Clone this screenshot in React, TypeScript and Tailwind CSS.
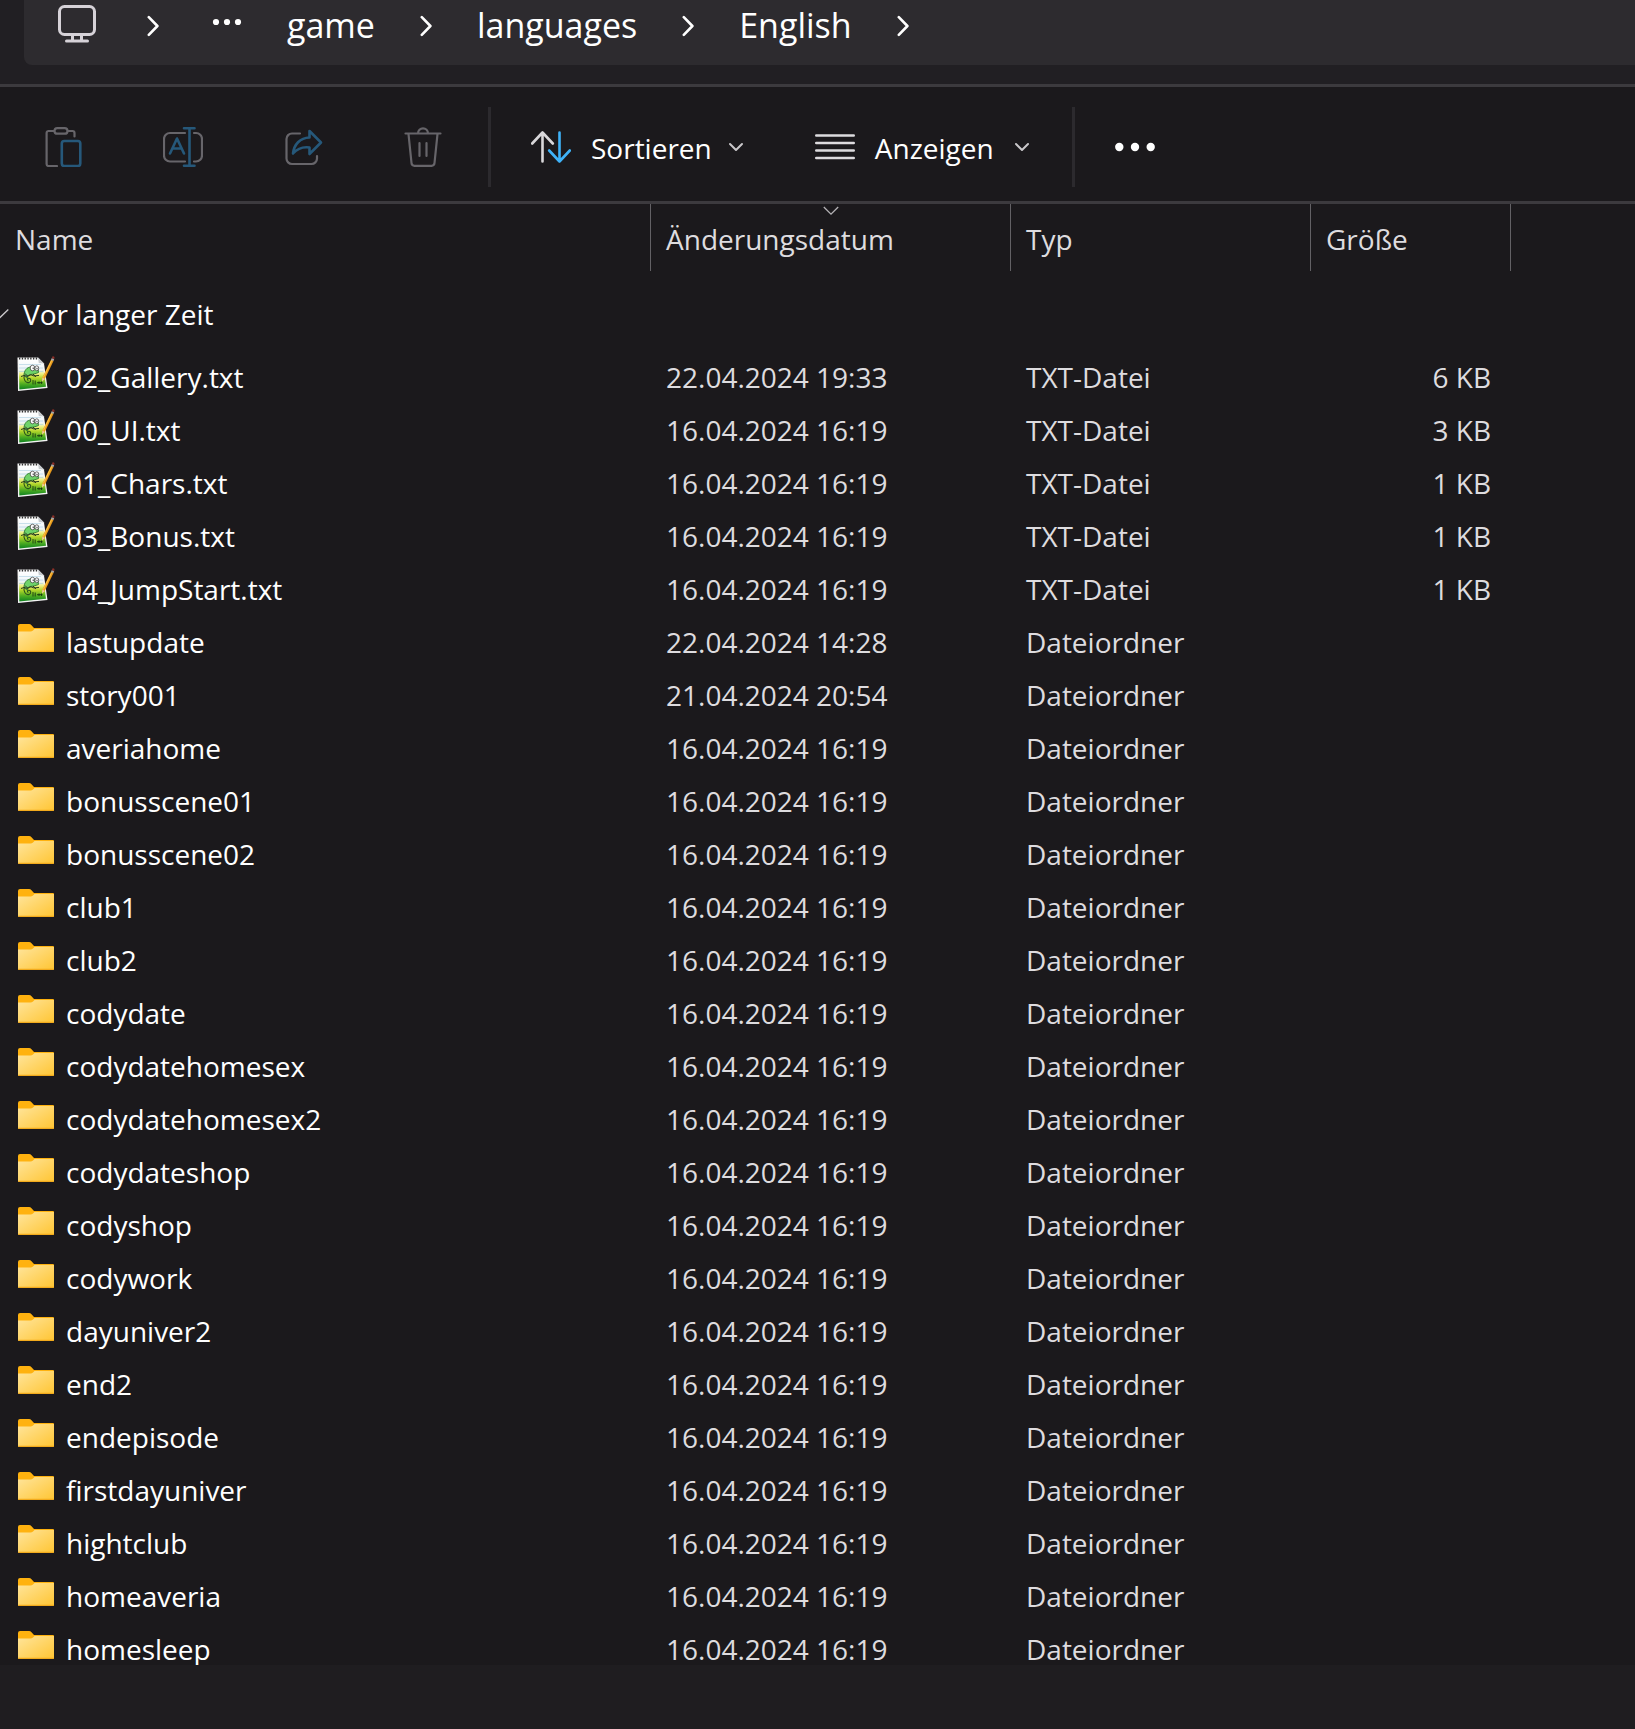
import React from "react";

type Entry = { name: string; date: string; size?: string };

const OLD = "16.04.2024 16:19";

const entries: Entry[] = [
  { name: "02_Gallery.txt", date: "22.04.2024 19:33", size: "6 KB" },
  { name: "00_UI.txt", date: OLD, size: "3 KB" },
  { name: "01_Chars.txt", date: OLD, size: "1 KB" },
  { name: "03_Bonus.txt", date: OLD, size: "1 KB" },
  { name: "04_JumpStart.txt", date: OLD, size: "1 KB" },
  { name: "lastupdate", date: "22.04.2024 14:28" },
  { name: "story001", date: "21.04.2024 20:54" },
  ...[
    "averiahome",
    "bonusscene01",
    "bonusscene02",
    "club1",
    "club2",
    "codydate",
    "codydatehomesex",
    "codydatehomesex2",
    "codydateshop",
    "codyshop",
    "codywork",
    "dayuniver2",
    "end2",
    "endepisode",
    "firstdayuniver",
    "hightclub",
    "homeaveria",
    "homesleep",
  ].map((name) => ({ name, date: OLD })),
];

function MonitorIcon() {
  return (
    <svg className="h-10 w-[38px]" viewBox="0 0 38 40" fill="none" stroke="#d6d2d8" strokeWidth="3" strokeLinecap="round">
      <rect x="1.5" y="2.5" width="35" height="28" rx="5" />
      <path d="M14.5 31v6M23.5 31v6M8.5 37h21" />
    </svg>
  );
}

function CrumbChevron() {
  return (
    <svg className="mt-1 h-6 w-3 shrink-0" viewBox="0 0 12 24" fill="none" stroke="#fff" strokeWidth="2.6" strokeLinecap="round" strokeLinejoin="round" aria-hidden="true">
      <path d="M1.8 3.2l8.6 8.8-8.6 8.8" />
    </svg>
  );
}

function DownChevron() {
  return (
    <svg className="h-4 w-4 shrink-0" viewBox="0 0 16 16" fill="none" stroke="#c9c7ca" strokeWidth="2" strokeLinecap="round" strokeLinejoin="round" aria-hidden="true">
      <path d="M2 5l6 6 6-6" />
    </svg>
  );
}

function PasteIcon() {
  return (
    <svg className="h-10 w-10" viewBox="0 0 40 40" fill="none" stroke="#67656a" strokeWidth="2.2" strokeLinecap="round" strokeLinejoin="round">
      <path d="M14 39H5.6a2 2 0 0 1-2-2V6a2 2 0 0 1 2-2H11M25 4h4.5a2 2 0 0 1 2 2v3.500" />
      <rect x="11.500" y="1.100" width="13" height="5.600" rx="2.800" />
      <rect x="18.800" y="14" width="18.500" height="25" rx="2.500" stroke="#26587a" strokeWidth="2.600" />
    </svg>
  );
}

function RenameIcon() {
  return (
    <svg className="h-10 w-10" viewBox="0 0 40 40" fill="none" stroke="#67656a" strokeWidth="2.2" strokeLinecap="round" strokeLinejoin="round">
      <path d="M22 6H7a6 6 0 0 0-6 6v16.500a6 6 0 0 0 6 6h15M31 6h2a6 6 0 0 1 6 6v16.500a6 6 0 0 1-6 6h-2" />
      <g stroke="#26587a" strokeWidth="2.600">
        <path d="M26.500 1.500v37M21 1.300h10.500M21 38.700h10.500" />
        <path d="M7 26.500l7-15 7 15M9.500 21.500h9.200" />
      </g>
    </svg>
  );
}

function ShareIcon() {
  return (
    <svg className="h-10 w-10" viewBox="0 0 40 40" fill="none" stroke="#67656a" strokeWidth="2.2" strokeLinecap="round" strokeLinejoin="round">
      <path d="M17 6.500H9a5.500 5.500 0 0 0-5.500 5.500v19.500A5.500 5.500 0 0 0 9 37h19.500a5.500 5.500 0 0 0 5.500-5.500V29" />
      <path d="M26.500 4L38 15.500 26.500 27v-6.500c-7-1-12 1-16.500 6C11 17.500 17 10.800 26.500 10.500z" stroke="#26587a" strokeWidth="2.600" />
    </svg>
  );
}

function TrashIcon() {
  return (
    <svg className="h-10 w-10" viewBox="0 0 40 40" fill="none" stroke="#67656a" strokeWidth="2.2" strokeLinecap="round" strokeLinejoin="round">
      <path d="M2.500 6.500h35M15 6.500a5 5.200 0 0 1 10 0M5.500 7l3 29a3 3 0 0 0 3 2.800h17a3 3 0 0 0 3-2.800l3-29M16.500 16v13M23.500 16v13" />
    </svg>
  );
}

function SortIcon() {
  return (
    <svg className="h-10 w-10" viewBox="0 0 40 40" fill="none" strokeWidth="2.600" strokeLinecap="round" strokeLinejoin="round" aria-hidden="true">
      <path d="M11.500 34.500v-29M1.200 16.500l10.300-11 10.300 11" stroke="#d9d7da" />
      <path d="M28.500 5.500v29M18.200 23.500l10.300 11 10.300-11" stroke="#3fb2f8" />
    </svg>
  );
}

function LinesIcon() {
  return (
    <svg className="h-10 w-10" viewBox="0 0 40 40" stroke="#dddbde" strokeWidth="2.400" strokeLinecap="round" aria-hidden="true">
      <path d="M1.200 8.500h37.600M1.200 16h37.600M1.200 23.500h37.600M1.200 31h37.600" />
    </svg>
  );
}

function FolderIcon() {
  return (
    <svg className="mb-[5px] h-10 w-10 shrink-0" viewBox="0 0 40 40" aria-hidden="true">
      <defs>
        <linearGradient id="folder-front" x1="0" y1="0" x2="1" y2="1">
          <stop offset="0" stopColor="#ffe59c" />
          <stop offset="1" stopColor="#ffc533" />
        </linearGradient>
      </defs>
      <path d="M2 6a2 2 0 0 1 2-2h9q1.500 0 2.500 1.200L18 8h19a1 1 0 0 1 1 1v8H2z" fill="#ffb20f" />
      <path d="M2 11.500h12.500q1.500 0 2.500-1l1.500-1.500H38v22a1 1 0 0 1-1 1H3a1 1 0 0 1-1-1z" fill="url(#folder-front)" />
      <path d="M2.300 31.400h35.400" stroke="#f2aa1c" strokeWidth="1.200" />
    </svg>
  );
}

function TextFileIcon() {
  return (
    <svg className="mb-[5px] h-10 w-10 shrink-0" viewBox="0 0 40 40" aria-hidden="true">
      <defs>
        <linearGradient id="note-page" x1="0" y1="0" x2="0" y2="1">
          <stop offset="0" stopColor="#ffffff" />
          <stop offset="0.34" stopColor="#eef5f8" />
          <stop offset="0.48" stopColor="#eef080" />
          <stop offset="0.62" stopColor="#b4d62a" />
          <stop offset="0.82" stopColor="#4cab22" />
          <stop offset="1" stopColor="#0f8220" />
        </linearGradient>
      </defs>
      <path d="M1.500 2.500L22 2.500 28 8.500 31.500 33 2 36z" fill="#f4f4f4" />
      <path d="M2.800 5L22 4.500 27 9 30 31.800 3.300 34.500z" fill="url(#note-page)" />
      <path d="M22 2.500l.8 5.500 5.200.5z" fill="#c5c9cc" />
      <path d="M3 3.500h19" stroke="#303030" strokeWidth="1.800" strokeDasharray="1.300 1.500" />
      <path d="M3 9.500h22M3 13h24M3 16.500h24" stroke="#a9cfe0" strokeWidth="0.600" />
      <path d="M8 20.500c0-5 3-8.500 7-8.500l7 2 .5 3.500-4.500 1.500-4 .5c-2 .5-3 2-2.500 4z" fill="#6fd36a" stroke="#2f7a2c" strokeWidth="0.900" />
      <path d="M8.300 20c-1.300 4.500 1.500 8.500 4.700 7.500 2.800-1 2-4.500-.5-4.200-1.500.4-1.200 2 0 2" fill="none" stroke="#28521c" strokeWidth="1.100" />
      <path d="M5 21.500l3-1 3 .8 4-1.500 3 1.200 5-.6M9 18.500l3 3M17 19l3 3" fill="none" stroke="#2a3a20" strokeWidth="1" />
      <ellipse cx="16.500" cy="13" rx="2.300" ry="2.800" fill="#fff" stroke="#333" strokeWidth="0.700" />
      <ellipse cx="20.800" cy="13.300" rx="1.900" ry="2.500" fill="#fff" stroke="#333" strokeWidth="0.700" />
      <path d="M17.200 12.500v1.500M21 12.800v1.500" stroke="#111" strokeWidth="0.900" />
      <path d="M17 25v4.500M19.200 25.500v4M21 27.700h5.500M23 26.500v2.400M25.500 26.500v2.400" stroke="#14380f" strokeWidth="0.900" />
      <path d="M26 26.500l.4-4L35.200 4.500l2.400 1.200L28.800 24z" fill="#e89a1c" />
      <path d="M27.300 22.600l8.500-17.500" stroke="#ffc94e" strokeWidth="0.900" />
      <path d="M26 26.500l.4-4 2.400 1.500z" fill="#ead2a4" />
      <path d="M35 4.900l.8-1.800 2.400 1.200-.8 1.800z" fill="#a9a9a9" />
      <path d="M35.800 3.100l1-2 1.700.8-.3 2.400z" fill="#8c2f28" />
    </svg>
  );
}

function ToolDivider() {
  return <div className="h-20 w-[3px] shrink-0 bg-[#2c2a2e]" />;
}

const crumb = "cursor-pointer pt-0.5 text-[34px] leading-[46px] whitespace-nowrap";
const headCell = "h-[67px] border-r border-[#636165] p-0 font-normal";
const headButton = "h-full w-full cursor-pointer pt-0.5 pl-[15px] text-left";

export default function App() {
  return (
    <div className="flex h-screen flex-col overflow-hidden bg-[#1b191c] font-['Open_Sans','Noto_Sans',sans-serif] text-[28px] text-white">
      <header className="border-b-[3px] border-[#3c3a3e] bg-[#211f23] pb-[19px] pl-6">
        <nav aria-label="Pfad" className="flex items-center gap-[45px] rounded-bl-lg bg-[#2d2b2f] pb-[17px] pl-[34px]">
          <button aria-label="Dieser PC" className="mr-1.5 cursor-pointer">
            <MonitorIcon />
          </button>
          <CrumbChevron />
          <button aria-label="Weitere Ordner" className="ml-2 cursor-pointer">
            <svg className="mb-1 h-2 w-[30px]" viewBox="0 0 30 8" fill="#fff">
              <circle cx="4" cy="4" r="3.100" />
              <circle cx="15" cy="4" r="3.100" />
              <circle cx="26" cy="4" r="3.100" />
            </svg>
          </button>
          <button className={crumb}>game</button>
          <CrumbChevron />
          <button className={crumb}>languages</button>
          <CrumbChevron />
          <button className={crumb}>English</button>
          <CrumbChevron />
        </nav>
      </header>

      <div role="toolbar" aria-label="Befehle" className="flex h-[117px] shrink-0 items-center border-b-[3px] border-[#3c3a3e] pt-1.5 pl-[43px]">
        <div className="mr-[45px] flex gap-20">
          <button aria-label="Einfügen" disabled><PasteIcon /></button>
          <button aria-label="Umbenennen" disabled><RenameIcon /></button>
          <button aria-label="Freigeben" disabled><ShareIcon /></button>
          <button aria-label="Löschen" disabled><TrashIcon /></button>
        </div>
        <ToolDivider />
        <div className="mr-[42px] ml-10 flex gap-[71px]">
          <button className="flex cursor-pointer items-center">
            <SortIcon />
            <span className="mr-4 ml-5 pt-0.5 leading-[38px]">Sortieren</span>
            <DownChevron />
          </button>
          <button className="flex cursor-pointer items-center">
            <LinesIcon />
            <span className="mr-5 ml-5 pt-0.5 leading-[38px]">Anzeigen</span>
            <DownChevron />
          </button>
        </div>
        <ToolDivider />
        <button aria-label="Mehr anzeigen" className="ml-10 cursor-pointer">
          <svg className="h-10 w-10" viewBox="0 0 40 40" fill="#fff">
            <circle cx="4.300" cy="20" r="4.200" />
            <circle cx="20" cy="20" r="4.200" />
            <circle cx="35.700" cy="20" r="4.200" />
          </svg>
        </button>
      </div>

      <main className="min-h-0 flex-1">
        <table className="w-full table-fixed border-separate border-spacing-0 text-left text-[#dedcdf]">
          <colgroup>
            <col className="w-[651px]" />
            <col className="w-[360px]" />
            <col className="w-[300px]" />
            <col className="w-[200px]" />
            <col />
          </colgroup>
          <thead>
            <tr>
              <th scope="col" className={headCell}>
                <button className={headButton}>Name</button>
              </th>
              <th scope="col" aria-sort="descending" className={headCell + " relative"}>
                <button className={headButton}>Änderungsdatum</button>
                <svg className="absolute top-0.5 left-1/2 h-2.5 w-4 -translate-x-1/2" viewBox="0 0 16 10" fill="none" stroke="#b5b3b6" strokeWidth="1.300" aria-hidden="true">
                  <path d="M.8 1l7.200 7.200L15.200 1" />
                </svg>
              </th>
              <th scope="col" className={headCell}>
                <button className={headButton}>Typ</button>
              </th>
              <th scope="col" className={headCell}>
                <button className={headButton}>Größe</button>
              </th>
              <td />
            </tr>
          </thead>
          <tbody>
            <tr>
              <th scope="rowgroup" colSpan={5} className="h-20 p-0 font-normal text-white">
                <button className="flex cursor-pointer items-center gap-3.5 pt-1.5">
                  <svg className="h-3 w-[9px]" viewBox="0 0 9 12" fill="none" stroke="#c9c7ca" strokeWidth="1.300" aria-hidden="true">
                    <path d="M-7 2l7 7.500L8.300 1.500" />
                  </svg>
                  Vor langer Zeit
                </button>
              </th>
            </tr>
            {entries.map((e) => (
              <tr key={e.name} className="leading-[53px] hover:bg-[#2a282c]">
                <td className="p-0 text-white">
                  <div className="flex h-[53px] items-center gap-2.5 pl-4">
                    {e.size ? <TextFileIcon /> : <FolderIcon />}
                    {e.name}
                  </div>
                </td>
                <td className="p-0 pl-[15px]">{e.date}</td>
                <td className="p-0 pl-[15px]">{e.size ? "TXT-Datei" : "Dateiordner"}</td>
                <td className="p-0 pr-5 text-right">{e.size}</td>
                <td />
              </tr>
            ))}
          </tbody>
        </table>
      </main>

      <footer className="h-16 shrink-0 bg-[#1f1d20]" />
    </div>
  );
}
